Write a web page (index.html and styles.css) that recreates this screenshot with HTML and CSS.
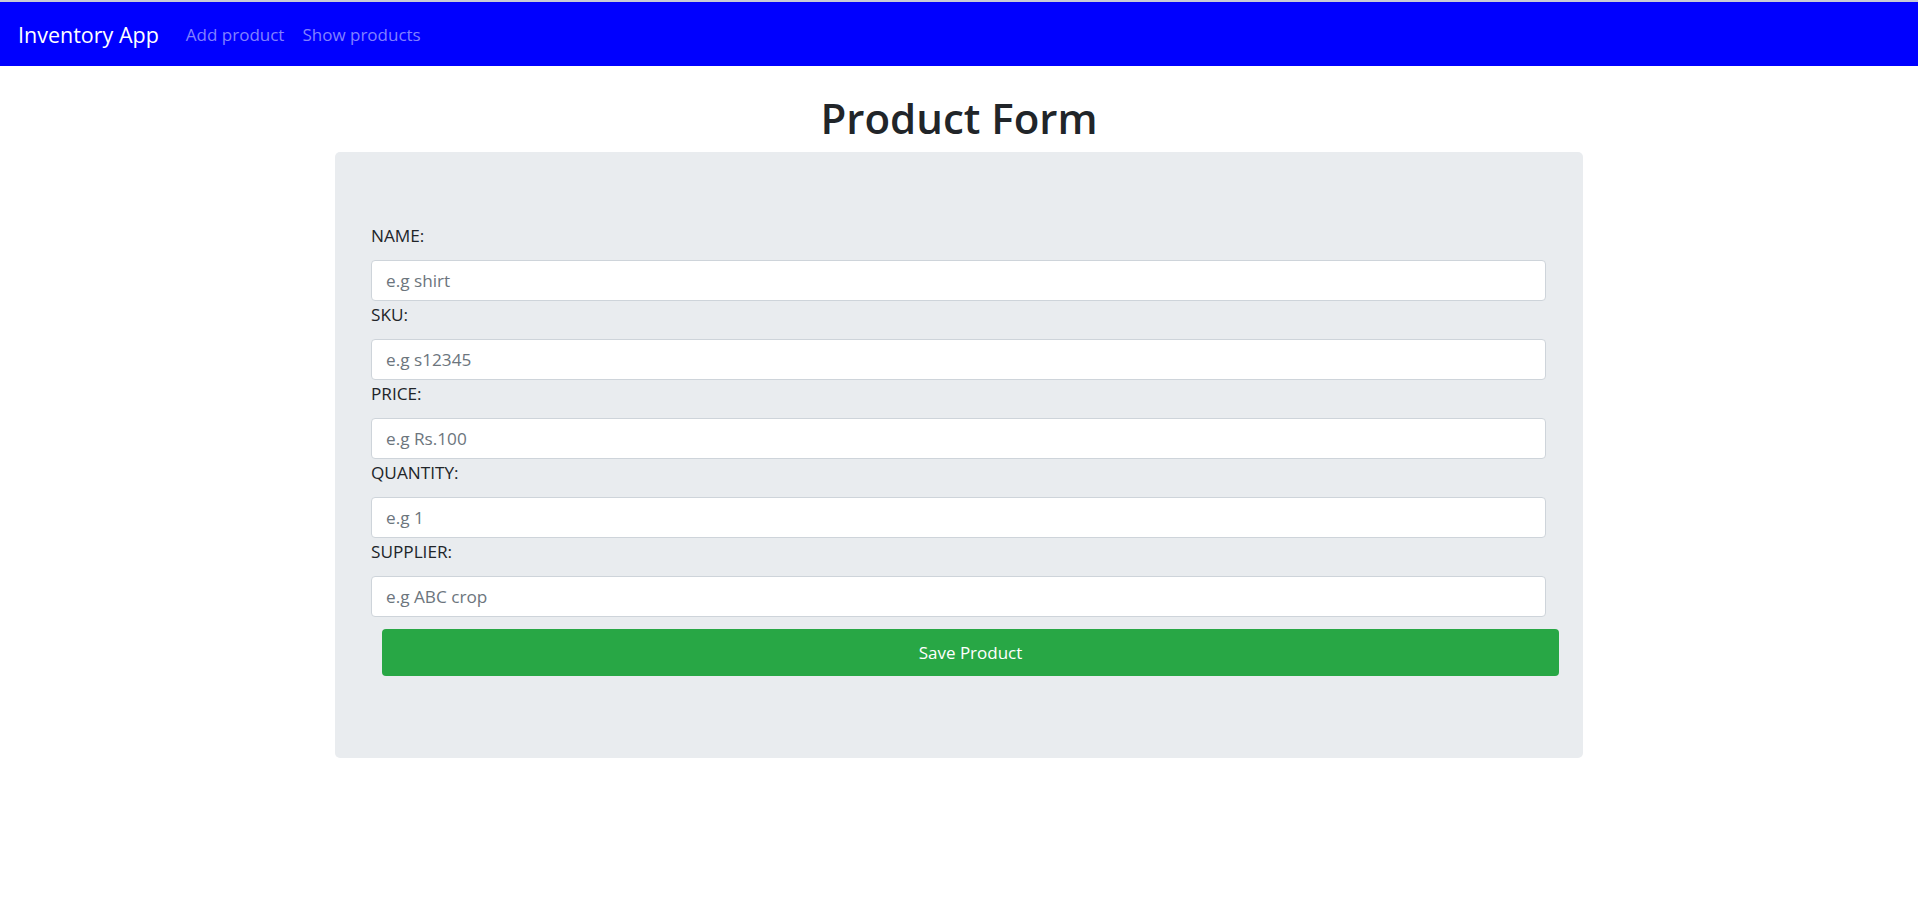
FILE: index.html
```html
<!DOCTYPE html>
<html lang="en">
<head>
<meta charset="utf-8">
<title>Inventory App</title>
<link rel="stylesheet" href="styles.css">
</head>
<body>
<div class="topline"></div>
<nav class="navbar">
  <a class="brand" href="#">Inventory App</a>
  <a class="nav-link" href="#">Add product</a>
  <a class="nav-link" href="#">Show products</a>
</nav>
<main class="page">
  <h1 class="title">Product Form</h1>
  <section class="card">
    <form class="form">
      <label class="label" for="name">NAME:</label>
      <input class="input" id="name" type="text" placeholder="e.g shirt">
      <label class="label" for="sku">SKU:</label>
      <input class="input" id="sku" type="text" placeholder="e.g s12345">
      <label class="label" for="price">PRICE:</label>
      <input class="input" id="price" type="text" placeholder="e.g Rs.100">
      <label class="label" for="qty">QUANTITY:</label>
      <input class="input" id="qty" type="text" placeholder="e.g 1">
      <label class="label" for="supplier">SUPPLIER:</label>
      <input class="input" id="supplier" type="text" placeholder="e.g ABC crop">
      <button class="btn" type="button">Save Product</button>
    </form>
  </section>
</main>
</body>
</html>
```
FILE: styles.css
```css
* { box-sizing: border-box; }
html, body {
  margin: 0;
  padding: 0;
  background: #ffffff;
  font-family: "Open Sans", "Noto Sans", sans-serif;
  color: #212529;
}
.topline {
  height: 2px;
  background: #c9cbd6;
}
.navbar {
  height: 64px;
  background: #0000ff;
  display: flex;
  align-items: center;
  padding: 0 17px;
}
.brand {
  color: #ffffff;
  text-decoration: none;
  font-size: 21.5px;
  margin-right: 18px;
  padding-left: 1px;
}
.nav-link {
  color: #8080ff;
  text-decoration: none;
  font-size: 17px;
  padding: 0 9px;
}
.page {
  padding-top: 25px;
}
.title {
  margin: 0 0 8px 0;
  text-align: center;
  font-size: 42px;
  line-height: 53px;
  font-weight: 600;
  color: #212529;
}
.card {
  width: 1248px;
  margin: 0 auto;
  background: #e9ecef;
  border-radius: 5px;
  padding: 70px 37px 82px 36px;
}
.form {
  display: flex;
  flex-direction: column;
}
.label {
  display: block;
  height: 26px;
  line-height: 28px;
  font-size: 17.2px;
  margin-bottom: 12px;
  color: #212529;
}
.input {
  display: block;
  width: 100%;
  height: 41px;
  padding: 0 14px;
  font-family: inherit;
  font-size: 17.2px;
  color: #495057;
  background: #ffffff;
  border: 1px solid #ced4da;
  border-radius: 4px;
  outline: none;
}
.input::placeholder {
  color: #6c757d;
}
.btn {
  display: block;
  margin-top: 12px;
  margin-left: 11px;
  width: calc(100% + 2px);
  height: 47px;
  background: #28a745;
  color: #ffffff;
  border: none;
  border-radius: 4px;
  font-family: inherit;
  font-size: 17px;
  cursor: pointer;
}
```
